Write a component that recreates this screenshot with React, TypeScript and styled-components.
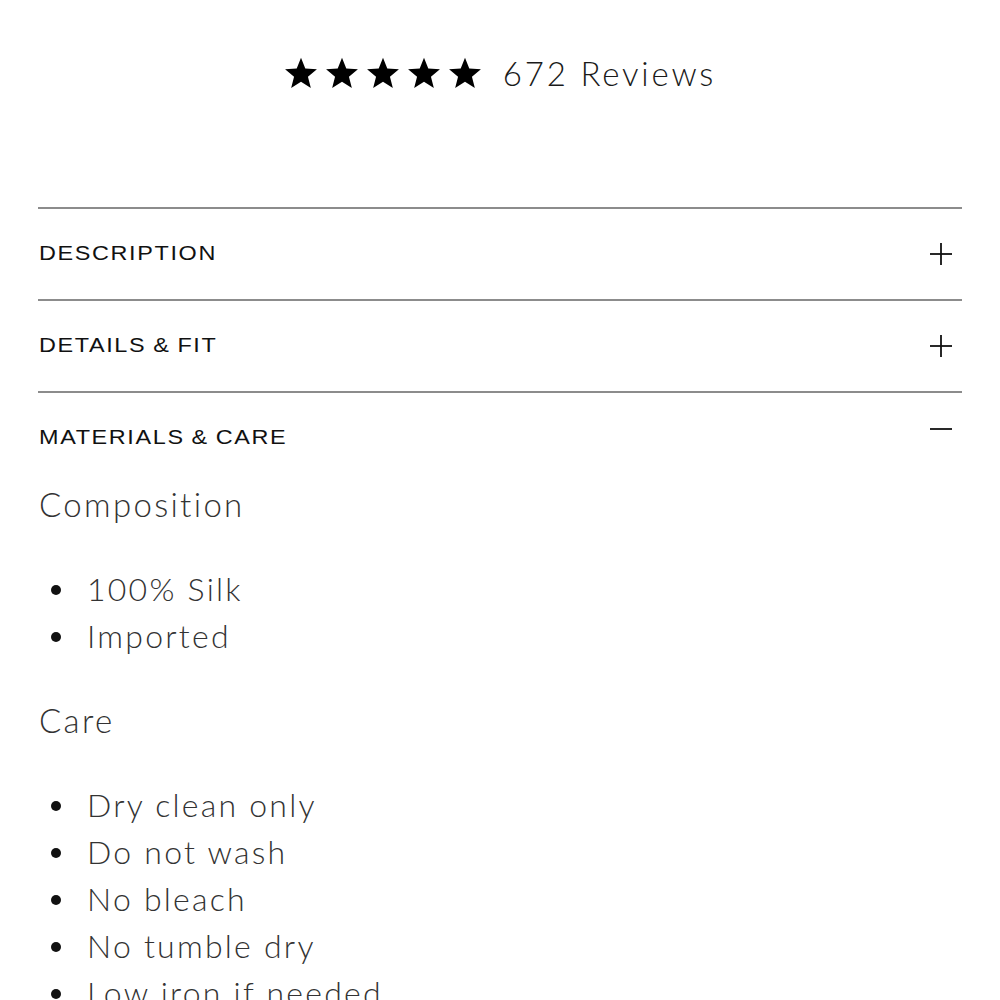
import React, { useState } from 'react'
import styled, { createGlobalStyle } from 'styled-components'

const GlobalStyle = createGlobalStyle`
  html, body {
    margin: 0;
    padding: 0;
    background: #fff;
  }
`

const Page = styled.div`
  width: 1000px;
  padding: 53px 38px 0;
  box-sizing: border-box;
  font-family: Lato, 'Open Sans', sans-serif;
  color: #222;
`

const RatingRow = styled.div`
  display: flex;
  align-items: center;
  justify-content: center;
  height: 40px;
  margin-bottom: 114px;
`

const Stars = styled.div`
  display: flex;
  gap: 7px;
  margin-right: 21px;
`

const ReviewCount = styled.span`
  font-family: Lato, sans-serif;
  font-weight: 300;
  font-size: 33px;
  letter-spacing: 0.085em;
  color: #1a1a1a;
`

const Section = styled.section`
  border-top: 2px solid #8c8c8c;
`

const SectionHeader = styled.button`
  display: flex;
  align-items: center;
  justify-content: space-between;
  width: 100%;
  height: 90px;
  padding: 0 10px 0 1px;
  border: 0;
  background: none;
  cursor: pointer;
  text-align: left;
`

// the reference heading face is an extended grotesque, so widen Liberation Sans
const SectionTitle = styled.span`
  display: inline-block;
  font-family: 'Liberation Sans', Arial, sans-serif;
  font-size: 19.5px;
  letter-spacing: 0.07em;
  word-spacing: -1px;
  color: #111;
  padding-bottom: 2px;
  transform: scaleX(1.2);
  transform-origin: left center;
`

const Toggle = styled.svg<{ $open: boolean }>`
  width: 22px;
  height: 22px;
  flex: none;
  margin-top: ${(p) => (p.$open ? '-18px' : '0')};
`

const Panel = styled.div`
  padding: 0 1px 0;
`

const BlockTitle = styled.h3`
  margin: 0;
  font-weight: 300;
  font-size: 33px;
  line-height: 42px;
  letter-spacing: 0.07em;
  color: #333;
`

const List = styled.ul`
  list-style: none;
  margin: 40px 0;
  padding: 0;
`

const Item = styled.li`
  display: flex;
  align-items: center;
  font-weight: 300;
  font-size: 32px;
  line-height: 47px;
  letter-spacing: 0.07em;
  color: #333;

  &::before {
    content: '';
    width: 10px;
    height: 10px;
    border-radius: 50%;
    background: #111;
    margin: 2px 26px 0 12px;
    flex: none;
  }
`

const Star = () => (
  <svg width="34" height="34" viewBox="0 0 24 24">
    <path
      d="M12 1.2l3.03 7.64 8.2.52-6.33 5.23 2.05 7.96L12 18.1l-6.95 4.45 2.05-7.96L.77 9.36l8.2-.52z"
      fill="#000"
    />
  </svg>
)

type SectionData = {
  title: string
  blocks?: { heading: string; items: string[] }[]
}

const sections: SectionData[] = [
  { title: 'DESCRIPTION' },
  { title: 'DETAILS & FIT' },
  {
    title: 'MATERIALS & CARE',
    blocks: [
      { heading: 'Composition', items: ['100% Silk', 'Imported'] },
      {
        heading: 'Care',
        items: ['Dry clean only', 'Do not wash', 'No bleach', 'No tumble dry', 'Low iron if needed'],
      },
    ],
  },
]

const App: React.FC = () => {
  let [openIndex, setOpenIndex] = useState(2)

  return (
    <>
      <GlobalStyle />
      <Page>
        <RatingRow>
          <Stars>
            {[0, 1, 2, 3, 4].map((i) => (
              <Star key={i} />
            ))}
          </Stars>
          <ReviewCount>672 Reviews</ReviewCount>
        </RatingRow>
        {sections.map((s, idx) => {
          let open = idx === openIndex
          return (
            <Section key={s.title}>
              <SectionHeader onClick={() => setOpenIndex(open ? -1 : idx)}>
                <SectionTitle>{s.title}</SectionTitle>
                <Toggle $open={open} viewBox="0 0 22 22">
                  <path d="M0 11h22" stroke="#111" strokeWidth="1.8" />
                  {!open && <path d="M11 0v22" stroke="#111" strokeWidth="1.8" />}
                </Toggle>
              </SectionHeader>
              {open && s.blocks && (
                <Panel>
                  {s.blocks.map((b) => (
                    <div key={b.heading}>
                      <BlockTitle>{b.heading}</BlockTitle>
                      <List>
                        {b.items.map((it) => (
                          <Item key={it}>{it}</Item>
                        ))}
                      </List>
                    </div>
                  ))}
                </Panel>
              )}
            </Section>
          )
        })}
      </Page>
    </>
  )
}

export default App
